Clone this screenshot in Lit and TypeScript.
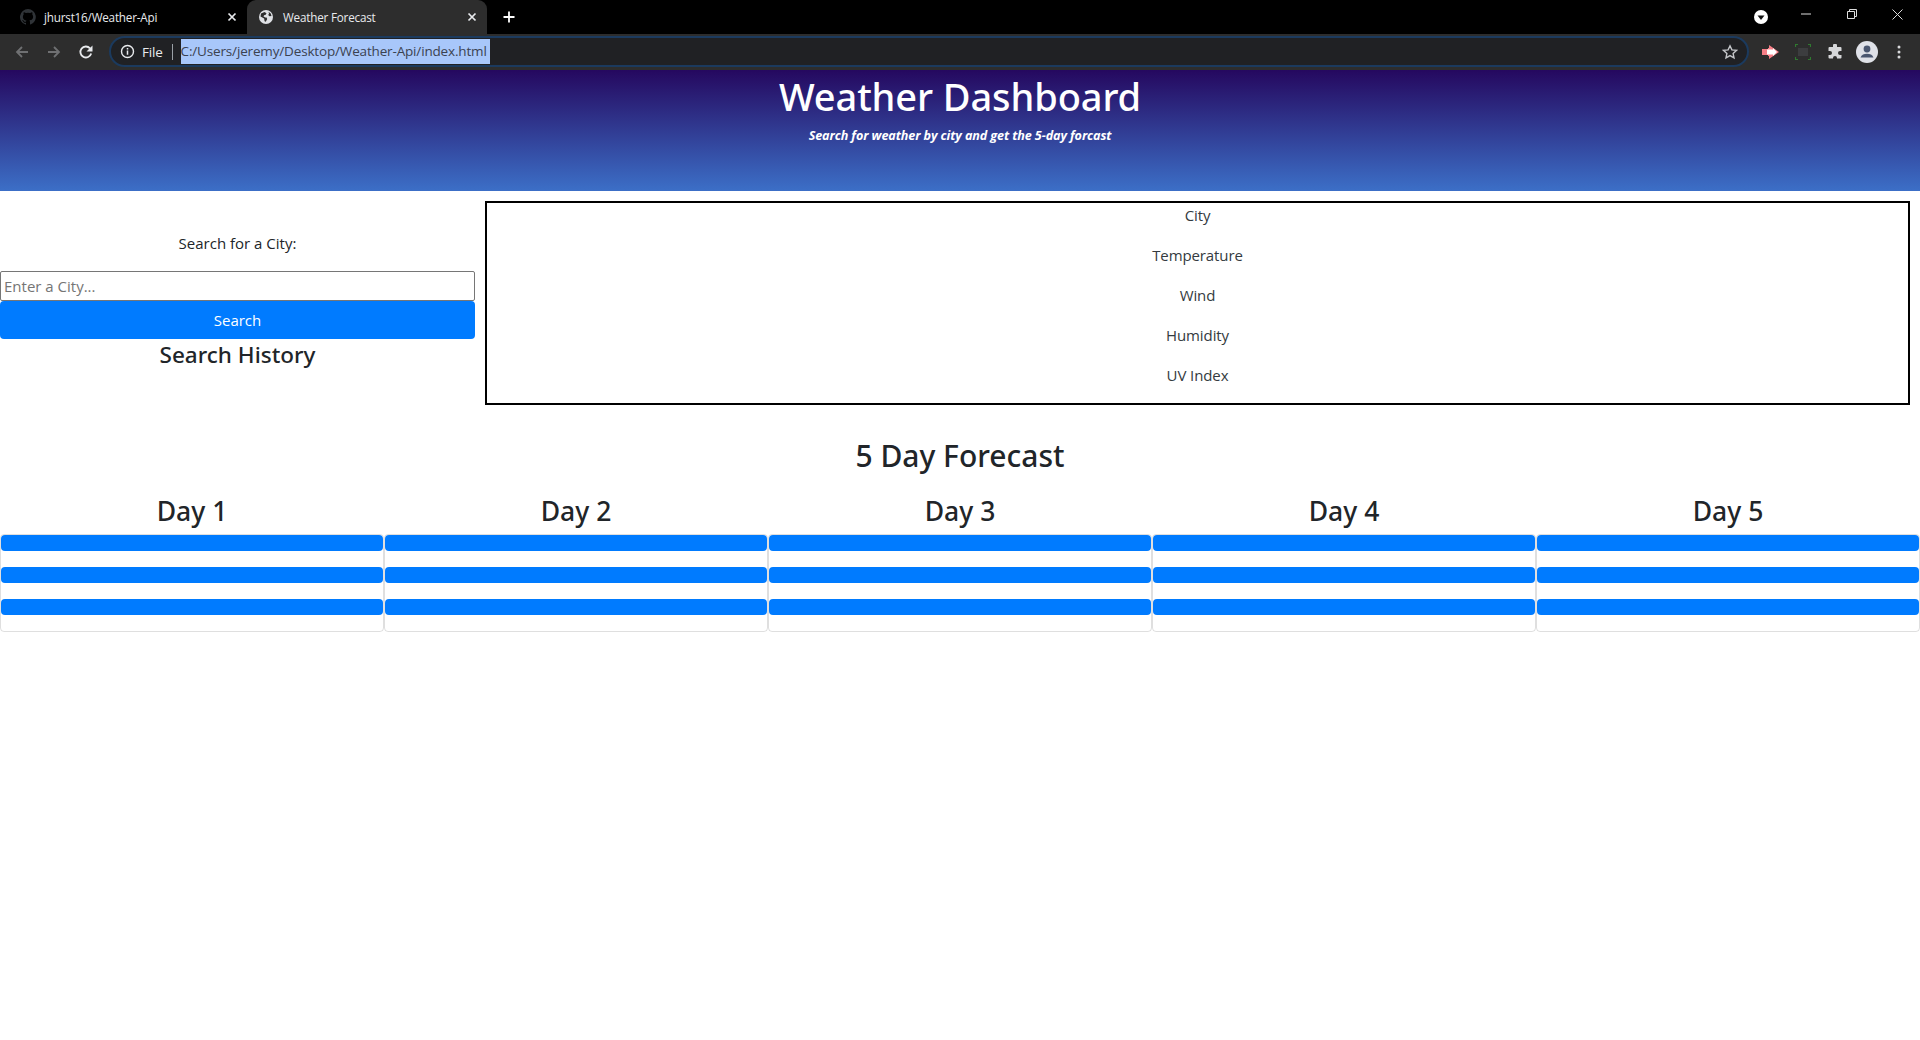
import { LitElement, html, css, svg } from "lit";
import { customElement } from "lit/decorators.js";

const back = svg`<svg width="16" height="16" viewBox="0 0 16 16"><path d="M14 8H3M8 3 3 8l5 5" fill="none" stroke="#6f7072" stroke-width="1.8"/></svg>`;
const fwd = svg`<svg width="16" height="16" viewBox="0 0 16 16"><path d="M2 8h11M8 3l5 5-5 5" fill="none" stroke="#6f7072" stroke-width="1.8"/></svg>`;
const reload = svg`<svg width="16" height="16" viewBox="0 0 16 16"><path d="M13.2 9.5A5.5 5.5 0 1 1 12 4.3" fill="none" stroke="#e8eaed" stroke-width="1.8"/><path d="M14.5 1.5v6h-6z" fill="#e8eaed"/></svg>`;
const info = svg`<svg width="15" height="15" viewBox="0 0 15 15"><circle cx="7.5" cy="7.5" r="6" fill="none" stroke="#e8eaed" stroke-width="1.4"/><path d="M7.5 6.6v4.2M7.5 4v1.5" stroke="#e8eaed" stroke-width="1.5"/></svg>`;
const star = svg`<svg width="16" height="16" viewBox="0 0 16 16"><path d="m8 1.8 1.9 4.1 4.5.5-3.3 3 .9 4.5L8 11.6l-4 2.3.9-4.5-3.3-3 4.5-.5z" fill="none" stroke="#c4c6c9" stroke-width="1.4"/></svg>`;
const github = svg`<svg width="16" height="16" viewBox="0 0 16 16"><path fill="#2f3337" d="M8 0a8 8 0 0 0-2.5 15.6c.4.1.5-.2.5-.4v-1.4c-2.2.5-2.7-1-2.7-1-.4-.9-.9-1.200-.9-1.200-.7-.5.100-.5.100-.5.800.100 1.200.8 1.200.8.700 1.200 1.900.900 2.300.700.100-.500.300-.900.500-1.100-1.800-.200-3.600-.900-3.600-4 0-.900.300-1.600.800-2.100-.100-.200-.400-1 .100-2.100 0 0 .700-.200 2.200.800a7.600 7.600 0 0 1 4 0c1.500-1 2.200-.800 2.200-.800.400 1.100.200 1.900.100 2.100.500.600.800 1.300.800 2.100 0 3.100-1.900 3.700-3.700 3.900.300.300.600.800.600 1.500v2.200c0 .200.100.500.600.400A8 8 0 0 0 8 0z"/></svg>`;
const globe = svg`<svg width="16" height="16" viewBox="0 0 16 16"><circle cx="8" cy="8" r="7" fill="#dfe1e5"/><path fill="#2d2d2d" d="M3 4.500 6.500 3l2 1.200-.8 1.600-1.600.4-.6 1.300 1.700 1 1.400.1.600 1.500-1.400 2.600-1.200-.4-.5-2.700L2.500 7.500zM10.500 2.800l2.200 1.700.8 2.500-2 .2-1.300-1.200.8-1.300z"/></svg>`;
const closeX = svg`<svg width="10" height="10" viewBox="0 0 10 10"><path d="m1.500 1.500 7 7m0-7-7 7" stroke="#e8eaed" stroke-width="1.700"/></svg>`;
const plus = svg`<svg width="12" height="12" viewBox="0 0 12 12"><path d="M6 .5v11M.5 6h11" stroke="#fff" stroke-width="1.800"/></svg>`;
const drop = svg`<svg width="14" height="14" viewBox="0 0 14 14"><circle cx="7" cy="7" r="7" fill="#fff"/><path d="M3.500 5.500h7L7 10z" fill="#111"/></svg>`;
const minimize = svg`<svg width="10" height="10" viewBox="0 0 10 10"><path d="M0 5h10" stroke="#ddd" stroke-width="1"/></svg>`;
const restore = svg`<svg width="10" height="10" viewBox="0 0 10 10"><path d="M.5 2.500h7v7h-7zM2.500 2.500v-2h7v7h-2" fill="none" stroke="#ddd" stroke-width="1"/></svg>`;
const closeWin = svg`<svg width="11" height="11" viewBox="0 0 11 11"><path d="m.5.500 10 10m0-10-10 10" stroke="#ddd" stroke-width="1"/></svg>`;
const arrowExt = svg`<svg width="18" height="14" viewBox="0 0 18 14"><path d="M0 4h6V3h1V0l10 7-10 7v-3H6v-1H0z" fill="#f77f87"/><path d="M5 4.500h6V3l4 4-4 4V9.500H5z" fill="#fff"/></svg>`;
const screenExt = svg`<svg width="16" height="16" viewBox="0 0 16 16"><rect x="3" y="4" width="10" height="8" fill="#3c3d3f"/><path d="M.5 3V.500H3M13 .500h2.500V3M15.500 13v2.500H13M3 15.500H.500V13" fill="none" stroke="#2f7a2f" stroke-width="1.200"/></svg>`;
const puzzle = svg`<svg width="16" height="16" viewBox="0 0 16 16"><path fill="#d6d7d9" d="M6 1.500a2 2 0 0 1 4 0V3h3.500a1 1 0 0 1 1 1v3H13a2 2 0 0 0 0 4h1.500v2.500a1 1 0 0 1-1 1H10V14a2 2 0 0 0-4 0v.500H2.500a1 1 0 0 1-1-1V11H3a2 2 0 0 0 0-4H1.500V4a1 1 0 0 1 1-1H6z"/></svg>`;
const avatar = svg`<svg width="22" height="22" viewBox="0 0 22 22"><circle cx="11" cy="11" r="11" fill="#dfe1e8"/><circle cx="11" cy="8" r="3.400" fill="#4a5670"/><path d="M4.500 16.500c1-3 3.500-3.800 6.500-3.800s5.500.8 6.500 3.800z" fill="#4a5670"/></svg>`;
const dots = svg`<svg width="4" height="14" viewBox="0 0 4 14"><circle cx="2" cy="2" r="1.500" fill="#d8d9db"/><circle cx="2" cy="7" r="1.500" fill="#d8d9db"/><circle cx="2" cy="12" r="1.500" fill="#d8d9db"/></svg>`;

@customElement("app-root")
export class AppRoot extends LitElement {
  static styles = css`
    :host {
      display: block;
      min-height: 1040px;
      background: #fff;
      color: #212529;
      font-family: "Open Sans", "Noto Sans", sans-serif;
      font-size: 15px;
      line-height: 24px;
      overflow: hidden;
    }
    .tabs {
      display: flex;
      align-items: flex-end;
      height: 34px;
      background: #000;
      font-size: 11.700px;
      letter-spacing: -0.2px;
      color: #e8eaed;
    }
    .tab {
      display: flex;
      align-items: center;
      height: 34px;
      width: 247px;
      box-sizing: border-box;
      padding: 0 10px 0 20px;
      white-space: nowrap;
    }
    .tab.active {
      width: 240px;
      background: #2d2d2d;
      border-radius: 9px 9px 0 0;
      padding-left: 11px;
    }
    .tab .title { flex: 1; margin-left: 8px; }
    .tab.active .title { margin-left: 9px; }
    .tab svg { display: block; }
    .newtab { margin: 0 0 11px 16px; height: 12px; }
    .newtab svg, .win svg, .slot svg { display: block; }
    .win { display: flex; align-items: center; margin-left: auto; height: 34px; }
    .win .d { margin-right: 33px; }
    .win .m { margin-right: 36px; margin-top: -6px; }
    .win .r { margin-right: 35px; margin-top: -6px; }
    .win .c { margin-right: 17px; margin-top: -6px; }
    .toolbar {
      display: flex;
      align-items: center;
      height: 36px;
      background: #2d2d2d;
    }
    .slot { display: flex; justify-content: center; align-items: center; }
    .nav { width: 32px; }
    .nav.first { margin-left: 6px; }
    .omni {
      display: flex;
      align-items: center;
      width: 1640px;
      height: 31px;
      box-sizing: border-box;
      margin: -1px 0 0 7px;
      border: 2px solid #1b3a5e;
      border-radius: 16px;
      background: #202124;
      color: #e8eaed;
      font-size: 13.500px;
      letter-spacing: -0.16px;
      white-space: nowrap;
    }
    .omni .info { margin-left: 9px; }
    .omni .file { margin-left: 7px; letter-spacing: -0.2px; }
    .omni .sep { width: 1px; height: 16px; background: #9aa0a6; margin: 0 8px 0 9px; }
    .omni .url { background: #a8c7fa; color: #3b4250; height: 25px; line-height: 25px; width: 309px; }
    .omni .star { margin-left: auto; margin-right: 9px; }
    .ext { width: 32px; }
    .ext.first { margin-left: 6px; }
    .header {
      height: 121px;
      background: linear-gradient(#25085f, #3c6fc7);
      color: #fff;
      text-align: center;
    }
    h1, h2, h3, h4 { font-family: "Noto Sans", "Open Sans", sans-serif; font-weight: 500; }
    h1 {
      margin: 0;
      padding-top: 2px;
      font-size: 38px;
      line-height: 48px;
      letter-spacing: -0.1px;
    }
    .header p {
      margin: 4px 0 0;
      font-size: 12.600px;
      font-weight: 700;
      font-style: italic;
      line-height: 24px;
      letter-spacing: -0.1px;
    }
    .top { display: flex; margin-top: 10px; padding-right: 10px; gap: 10px; align-items: flex-start; }
    .search { width: 475px; flex: none; padding-top: 30px; text-align: center; }
    .search label { display: block; margin-bottom: 16px; }
    .search input {
      display: block;
      width: 100%;
      height: 30px;
      box-sizing: border-box;
      border: 1px solid #767676;
      border-radius: 2px;
      padding: 1px 3px;
      font: inherit;
      background: #fff;
    }
    .search input::placeholder { color: #757575; }
    .search button {
      display: block;
      width: 100%;
      height: 38px;
      border: 0;
      border-radius: 4px;
      background: #007bff;
      color: #fff;
      font: inherit;
    }
    h4 { margin: 0; font-size: 22.500px; line-height: 32px; }
    .box {
      flex: 1;
      box-sizing: border-box;
      height: 204px;
      border: 2.500px solid #000;
      text-align: center;
      color: #343a40;
      letter-spacing: -0.1px;
    }
    .box p { margin: 0 0 16px; }
    h2 { margin: 32px 0 0; text-align: center; font-size: 30px; line-height: 38px; }
    .days { display: grid; grid-template-columns: repeat(5, 1fr); margin-top: 19px; }
    .day { min-width: 0; }
    h3 { margin: 0 0 6px; text-align: center; font-size: 26.500px; line-height: 34px; }
    .card {
      border: 1px solid rgba(0, 0, 0, 0.125);
      border-radius: 4px;
      height: 98px;
      box-sizing: border-box;
      display: flex;
      flex-direction: column;
      gap: 16px;
    }
    .bar { height: 16px; background: #007bff; border-radius: 4px; }
  `;

  render() {
    const info_rows = ["City", "Temperature", "Wind", "Humidity", "UV Index"];
    const days = [1, 2, 3, 4, 5];
    return html`
      <div class="tabs">
        <div class="tab">${github}<span class="title">jhurst16/Weather-Api</span>${closeX}</div>
        <div class="tab active">${globe}<span class="title">Weather Forecast</span>${closeX}</div>
        <div class="newtab">${plus}</div>
        <div class="win">
          <span class="d">${drop}</span><span class="m">${minimize}</span><span class="r">${restore}</span><span class="c">${closeWin}</span>
        </div>
      </div>
      <div class="toolbar">
        <span class="slot nav first">${back}</span>
        <span class="slot nav">${fwd}</span>
        <span class="slot nav">${reload}</span>
        <div class="omni">
          <span class="slot info">${info}</span>
          <span class="file">File</span>
          <span class="sep"></span>
          <span class="url">C:/Users/jeremy/Desktop/Weather-Api/index.html</span>
          <span class="slot star">${star}</span>
        </div>
        <span class="slot ext first">${arrowExt}</span>
        <span class="slot ext">${screenExt}</span>
        <span class="slot ext">${puzzle}</span>
        <span class="slot ext">${avatar}</span>
        <span class="slot ext">${dots}</span>
      </div>
      <header class="header">
        <h1>Weather Dashboard</h1>
        <p>Search for weather by city and get the 5-day forcast</p>
      </header>
      <section class="top">
        <div class="search">
          <label>Search for a City:</label>
          <input placeholder="Enter a City..." />
          <button>Search</button>
          <h4>Search History</h4>
        </div>
        <div class="box">${info_rows.map((r) => html`<p>${r}</p>`)}</div>
      </section>
      <h2>5 Day Forecast</h2>
      <section class="days">
        ${days.map(
          (d) => html`<div class="day">
            <h3>Day ${d}</h3>
            <div class="card"><div class="bar"></div><div class="bar"></div><div class="bar"></div></div>
          </div>`
        )}
      </section>
    `;
  }
}
